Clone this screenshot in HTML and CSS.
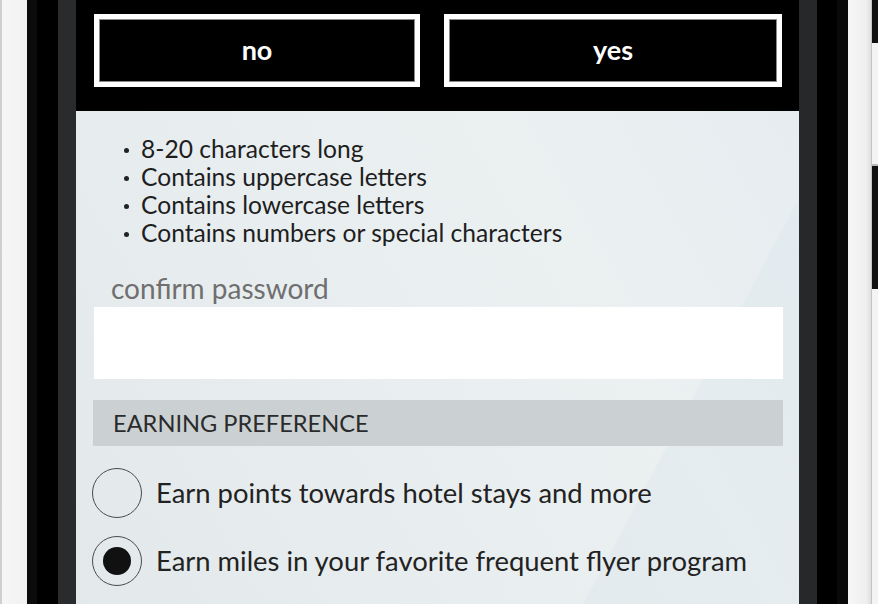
FILE: index.html
```html
<!DOCTYPE html>
<html>
<head>
<meta charset="utf-8">
<link rel="stylesheet" href="styles.css">
</head>
<body>
<div class="device">
  <div class="bezel-left">
    <div class="edge-l"></div>
    <div class="bl1"></div>
    <div class="bl2"></div>
    <div class="bl3"></div>
  </div>
  <div class="screen">
    <div class="header">
      <div class="btn btn-no">no</div>
      <div class="btn btn-yes">yes</div>
    </div>
    <div class="content">
      <ul class="rules">
        <li>8-20 characters long</li>
        <li>Contains uppercase letters</li>
        <li>Contains lowercase letters</li>
        <li>Contains numbers or special characters</li>
      </ul>
      <div class="label">confirm password</div>
      <div class="input"></div>
      <div class="section">EARNING PREFERENCE</div>
      <div class="radio-row first">
        <span class="radio"></span>
        <span class="radio-text">Earn points towards hotel stays and more</span>
      </div>
      <div class="radio-row">
        <span class="radio checked"></span>
        <span class="radio-text">Earn miles in your favorite frequent flyer program</span>
      </div>
    </div>
  </div>
  <div class="bezel-right">
    <div class="br1"></div>
    <div class="br2"></div>
    <div class="br3"></div>
    <div class="edge-r"></div>
    <div class="side">
      <div class="side-bar top"></div>
      <div class="side-gap"></div>
      <div class="side-bar mid"></div>
    </div>
  </div>
</div>
</body>
</html>
```

FILE: styles.css
```css
html, body {
  margin: 0;
  padding: 0;
  width: 878px;
  height: 604px;
  overflow: hidden;
  background: #f4f4f4;
}
.device {
  display: flex;
  height: 604px;
  font-family: Lato, "Open Sans", sans-serif;
}
.bezel-left, .bezel-right {
  display: flex;
  height: 100%;
  flex: none;
}
.bezel-left > div, .bezel-right > div { flex: none; }
.edge-l {
  width: 25px;
  border-left: 2px solid #cfcfcf;
  background: linear-gradient(90deg, #f6f6f6, #f2f2f2);
}
.bl1 { width: 10px; background: #0c0c0c; }
.bl2 { width: 21px; background: #000; }
.bl3 { width: 18px; background: #2a2b2d; }
.br1 { width: 18px; background: #26282a; }
.br2 { width: 20px; background: #000; }
.br3 { width: 11px; background: #0a0a0a; }
.edge-r {
  width: 23px;
  border-right: 1px solid #c4c4c4;
  background: linear-gradient(90deg, #f7f7f7, #eeeeee 80%, #dedede);
}
.side {
  width: 6px;
  display: flex;
  flex-direction: column;
  background: #f4f4f4;
}
.side > div { flex: none; }
.side-bar { background: #111; }
.side-bar.top { height: 43px; }
.side-gap { height: 121px; }
.side-bar.mid { height: 123px; border-top: 2px solid #bbb; }

.screen {
  width: 723px;
  flex: none;
  display: flex;
  flex-direction: column;
}
.header {
  height: 111px;
  box-sizing: border-box;
  background: #000;
  padding: 14px 17px 0 18px;
  display: flex;
  gap: 24px;
}
.btn {
  height: 73px;
  box-sizing: border-box;
  border: 5px solid #fff;
  box-shadow: inset 0 0 0 1px #8a8a8a;
  color: #fff;
  font-size: 27px;
  font-weight: bold;
  display: flex;
  align-items: center;
  justify-content: center;
  padding-bottom: 3px;
}
.btn-no { width: 326px; }
.btn-yes { flex: 1; }

.content {
  flex: 1;
  padding: 0 16px 0 18px;
  background:
    linear-gradient(118deg, rgba(255,255,255,0) 0%, rgba(255,255,255,0) 78%, rgba(210,225,232,0.25) 78.2%, rgba(210,225,232,0.25) 100%),
    linear-gradient(60deg, #e3e9eb 0%, #e8edef 40%, #ebf0f1 70%, #e6edf0 100%);
}
.rules {
  margin: 0;
  padding: 24px 0 0 47px;
  list-style: none;
  color: #1e1e1e;
  font-size: 24.6px;
  line-height: 28px;
}
.rules li {
  position: relative;
}
.rules li::before {
  content: "";
  position: absolute;
  left: -17px;
  top: 13px;
  width: 5px;
  height: 5px;
  border-radius: 50%;
  background: #222;
}
.label {
  margin-top: 24px;
  padding-left: 17px;
  font-size: 28px;
  line-height: 34px;
  color: #6f6f6f;
  height: 36px;
}
.input {
  height: 72px;
  background: #fff;
}
.section {
  margin-top: 21px;
  margin-left: -1px;
  height: 46px;
  background: #cbd1d3;
  color: #2b2b2b;
  font-size: 23.6px;
  display: flex;
  align-items: center;
  padding-left: 20px;
}
.radio-row {
  display: flex;
  align-items: center;
  height: 68px;
  margin-left: -2px;
}
.radio-row.first { margin-top: 13px; }
.radio {
  width: 50px;
  height: 50px;
  box-sizing: border-box;
  border: 1.5px solid #4a4a4a;
  border-radius: 50%;
  display: flex;
  align-items: center;
  justify-content: center;
  flex-shrink: 0;
}
.radio.checked::after {
  content: "";
  width: 28px;
  height: 28px;
  border-radius: 50%;
  background: #111;
}
.radio-text {
  margin-left: 14px;
  font-size: 27.4px;
  color: #222;
  padding-bottom: 2px;
}
```
